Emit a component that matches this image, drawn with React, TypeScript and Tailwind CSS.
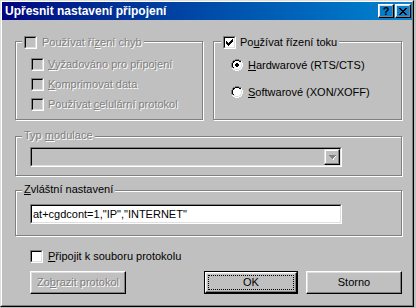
import React from "react";

type PixProps = { rows: string[]; colors: Record<string, string> };
function Pix({ rows, colors }: PixProps) {
  const rects: React.ReactNode[] = [];
  rows.forEach((r, y) => {
    for (let x = 0; x < r.length; x++) {
      const c = colors[r[x]];
      if (c) rects.push(<rect key={x + "-" + y} x={x} y={y} width={1} height={1} fill={c} />);
    }
  });
  return (
    <svg
      width={rows[0].length}
      height={rows.length}
      viewBox={`0 0 ${rows[0].length} ${rows.length}`}
      shapeRendering="crispEdges"
      className="block"
    >
      {rects}
    </svg>
  );
}

const CHECK = ["......X", ".....XX", "X...XXX", "XX.XXX.", "XXXXX..", ".XXX...", "..X...."];

const RADIO = [
  "....GGGG....",
  "..GGKKKKGG..",
  ".GKKwwwwKKW.",
  ".GKwwwwwwLW.",
  "GKwwwwwwwwLW",
  "GKwwwwwwwwLW",
  "GKwwwwwwwwLW",
  "GKwwwwwwwwLW",
  ".GKwwwwwwLW.",
  ".WLLwwwwLLW.",
  "..WWLLLLWW..",
  "....WWWW....",
];
const RADIO_ON = [
  "....GGGG....",
  "..GGKKKKGG..",
  ".GKKwwwwKKW.",
  ".GKwwwwwwLW.",
  "GKwwwXXwwwLW",
  "GKwwXXXXwwLW",
  "GKwwXXXXwwLW",
  "GKwwwXXwwwLW",
  ".GKwwwwwwLW.",
  ".WLLwwwwLLW.",
  "..WWLLLLWW..",
  "....WWWW....",
];

const CLOSE = ["XX....XX", ".XX..XX.", "..XXXX..", "...XX...", "..XXXX..", ".XX..XX.", "XX....XX"];

const ARROW = ["XXXXXXX.", ".XXXXXW.", "..XXXW..", "...XW...", "....W..."];

function Checkbox({ checked = false, disabled = false }: { checked?: boolean; disabled?: boolean }) {
  return (
    <span className="flex w-[13px] h-[13px] shrink-0 border border-t-[#808080] border-l-[#808080] border-r-white border-b-white">
      <span
        className={`flex flex-1 items-center justify-center border border-t-black border-l-black border-r-[#dfdfdf] border-b-[#dfdfdf] ${
          disabled ? "bg-[#c0c0c0]" : "bg-white"
        }`}
      >
        {checked && <Pix rows={CHECK} colors={{ X: disabled ? "#808080" : "#000000" }} />}
      </span>
    </span>
  );
}

function Radio({ on = false }: { on?: boolean }) {
  return (
    <span className="shrink-0">
      <Pix
        rows={on ? RADIO_ON : RADIO}
        colors={{ G: "#808080", K: "#000000", W: "#ffffff", L: "#dfdfdf", w: "#ffffff", X: "#000000" }}
      />
    </span>
  );
}

const disabledText = "text-[#808080] [text-shadow:1px_1px_0_#ffffff]";

function Group({
  legend,
  legendLeft,
  legendTop,
  className,
  children,
}: {
  legend: React.ReactNode;
  legendLeft: string;
  legendTop: string;
  className: string;
  children?: React.ReactNode;
}) {
  return (
    <div className={`relative border border-[#808080] shadow-[inset_1px_1px_0_#ffffff,1px_1px_0_#ffffff] ${className}`}>
      <div className={`absolute flex items-center bg-[#c0c0c0] px-[2px] ${legendLeft} ${legendTop}`}>{legend}</div>
      {children}
    </div>
  );
}

function RaisedButton({
  children,
  className,
  disabled = false,
}: {
  children: React.ReactNode;
  className: string;
  disabled?: boolean;
}) {
  return (
    <div
      className={`flex items-center justify-center h-[23px] border border-t-white border-l-white border-r-black border-b-black shadow-[inset_-1px_-1px_0_#808080,inset_1px_1px_0_#dfdfdf] ${
        disabled ? disabledText : ""
      } ${className}`}
    >
      {children}
    </div>
  );
}

export default function App() {
  return (
    <div className="w-[416px] h-[308px] bg-[#c0c0c0] font-['Liberation_Sans',Arial,sans-serif] text-[11px] leading-[13px] text-black">
      <div className="w-[414px] h-[307px] flex flex-col border border-t-[#dfdfdf] border-l-[#dfdfdf] border-r-black border-b-black">
        <div className="flex-1 flex flex-col border border-t-white border-l-white border-r-[#808080] border-b-[#808080]">
          {/* Title bar */}
          <div className="flex items-center h-[18px] pl-[3px] pr-[1px] bg-linear-to-r from-[#000080] to-[#1084d0]">
            <span className="text-white font-bold text-[12px] leading-[18px]">Upřesnit nastavení připojení</span>
            <div className="ml-auto flex gap-[1px]">
              <RaisedButton className="w-[16px] !h-[14px]">
                <span className="font-bold text-[11px] leading-[11px] text-black">?</span>
              </RaisedButton>
              <RaisedButton className="w-[16px] !h-[14px]">
                <Pix rows={CLOSE} colors={{ X: "#000000" }} />
              </RaisedButton>
            </div>
          </div>

          {/* Body */}
          <div className="flex flex-col pl-[13px] pr-[10px] pt-[21px]">
            <div className="flex gap-[10px] h-[79px]">
              <Group
                className="w-[188px] h-full flex flex-col pl-[15px] pt-[12px]"
                legendLeft="left-[6px]"
                legendTop="top-[-6px]"
                legend={
                  <>
                    <Checkbox disabled />
                    <span className={`ml-[5px] ${disabledText}`}>
                      Používat ří<span className="underline">z</span>ení chyb
                    </span>
                  </>
                }
              >
                <div className="flex items-center h-[20px] gap-[4px]">
                  <Checkbox disabled />
                  <span className={disabledText}>
                    <span className="underline">V</span>yžadováno pro připojení
                  </span>
                </div>
                <div className="flex items-center h-[20px] gap-[4px]">
                  <Checkbox disabled />
                  <span className={disabledText}>
                    <span className="underline">K</span>omprimovat data
                  </span>
                </div>
                <div className="flex items-center h-[20px] gap-[4px]">
                  <Checkbox disabled />
                  <span className={disabledText}>
                    Používat <span className="underline">c</span>elulární protokol
                  </span>
                </div>
              </Group>

              <Group
                className="flex-1 h-full flex flex-col pl-[17px] pt-[13px] gap-[7px]"
                legendLeft="left-[7px]"
                legendTop="top-[-6px]"
                legend={
                  <>
                    <Checkbox checked />
                    <span className="ml-[4px]">
                      Po<span className="underline">u</span>žívat řízení toku
                    </span>
                  </>
                }
              >
                <div className="flex items-center h-[20px] gap-[5px]">
                  <Radio on />
                  <span>
                    <span className="underline">H</span>ardwarové (RTS/CTS)
                  </span>
                </div>
                <div className="flex items-center h-[20px] gap-[5px]">
                  <Radio />
                  <span>
                    <span className="underline">S</span>oftwarové (XON/XOFF)
                  </span>
                </div>
              </Group>
            </div>

            <Group
              className="mt-[16px] h-[40px] pl-[14px] pt-[10px]"
              legendLeft="left-[6px]"
              legendTop="top-[-8px]"
              legend={
                <span className={disabledText}>
                  Typ <span className="underline">m</span>odulace
                </span>
              }
            >
              <div className="flex w-[312px] h-[20px] border border-t-[#808080] border-l-[#808080] border-r-white border-b-white">
                <div className="flex flex-1 justify-end border border-t-black border-l-black border-r-[#dfdfdf] border-b-[#dfdfdf] bg-[#c0c0c0]">
                  <div className="flex items-center justify-center w-[16px] h-[16px] border border-t-[#dfdfdf] border-l-[#dfdfdf] border-r-black border-b-black shadow-[inset_-1px_-1px_0_#808080,inset_1px_1px_0_#ffffff]">
                    <span className="ml-[1px] mt-[1px]">
                      <Pix rows={ARROW} colors={{ X: "#808080", W: "#ffffff" }} />
                    </span>
                  </div>
                </div>
              </div>
            </Group>

            <Group
              className="mt-[14px] h-[46px] pl-[14px] pt-[13px]"
              legendLeft="left-[6px]"
              legendTop="top-[-8px]"
              legend={
                <span>
                  <span className="underline">Z</span>vláštní nastavení
                </span>
              }
            >
              <div className="flex w-[312px] h-[20px] border border-t-[#808080] border-l-[#808080] border-r-white border-b-white">
                <div className="flex flex-1 items-center pl-[1px] border border-t-black border-l-black border-r-[#dfdfdf] border-b-[#dfdfdf] bg-white">
                  <span className="whitespace-pre">at+cgdcont=1,"IP","INTERNET"</span>
                </div>
              </div>
            </Group>

            <div className="mt-[14px] ml-[15px] flex items-center h-[13px] gap-[5px]">
              <Checkbox />
              <span>
                <span className="underline">P</span>řipojit k souboru protokolu
              </span>
            </div>

            <div className="mt-[8px] flex">
              <RaisedButton className="ml-[15px] w-[96px]" disabled>
                <span>
                  Zo<span className="underline">b</span>razit protokol
                </span>
              </RaisedButton>
              <div className="ml-[78px] w-[94px] h-[23px] border border-black flex">
                <div className="relative flex-1 flex items-center justify-center border border-t-white border-l-white border-r-black border-b-black shadow-[inset_-1px_-1px_0_#808080,inset_1px_1px_0_#dfdfdf]">
                  <div className="absolute inset-[2px] border border-dotted border-black" />
                  <span>OK</span>
                </div>
              </div>
              <RaisedButton className="ml-[8px] w-[96px]">
                <span>Storno</span>
              </RaisedButton>
            </div>
          </div>
        </div>
      </div>
    </div>
  );
}
